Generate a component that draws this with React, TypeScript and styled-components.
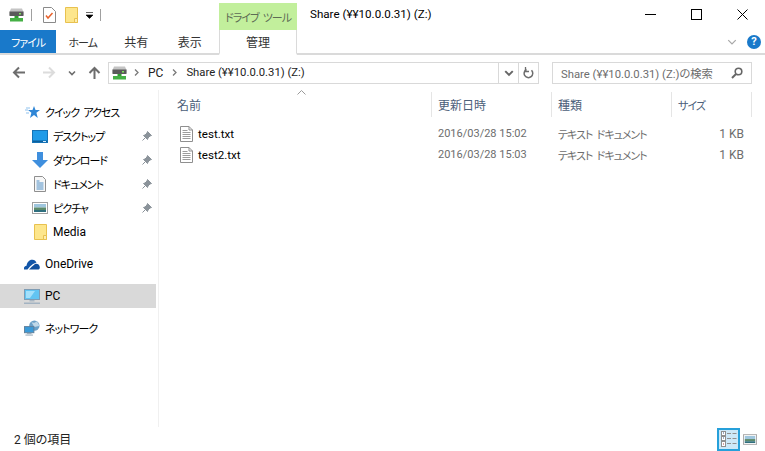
import React from "react";
import styled, { createGlobalStyle } from "styled-components";

const FONT = `Roboto, "Noto Sans CJK JP", sans-serif`;

const GlobalStyle = createGlobalStyle`
	html, body {
		margin: 0;
		padding: 0;
		background: #fff;
		overflow: hidden;
	}
	body {
		font-family: ${FONT};
		font-size: 12px;
		font-feature-settings: "palt";
		color: #000;
	}
`;

const DriveIcon = () => (
	<svg width="16" height="16" viewBox="0 0 16 16">
		<path d="M2 1.500h11l1.500 3.500v3H.5V5z" fill="#c4c4c4" />
		<rect x="0.500" y="4.500" width="14" height="4.500" fill="#5a5a5a" />
		<rect x="10" y="6" width="2" height="1.500" fill="#7fe05c" />
		<rect x="5.500" y="9" width="4" height="2" fill="#2f9e2f" />
		<rect x="1" y="11" width="13" height="3.500" fill="#45b045" />
	</svg>
);

const FolderIcon = () => (
	<svg width="13" height="16" viewBox="0 0 13 16">
		<path d="M.5.5h12v15H.5z" fill="#fde68c" stroke="#e8c14f" />
		<path d="M9.500 15.500v-4h3v4z" fill="#fdeeb0" stroke="#e8c14f" />
	</svg>
);

const PropsIcon = () => (
	<svg width="13" height="16" viewBox="0 0 13 16">
		<path d="M.5.5h8l4 4v11H.5z" fill="#fff" stroke="#8a8a8a" />
		<path d="M3 8.500l2 2.500 4.500-5" fill="none" stroke="#e8622c" strokeWidth="1.500" />
	</svg>
);

const TextFileIcon = () => (
	<svg width="13" height="16" viewBox="0 0 13 16">
		<path d="M.5.5h8.500l3.500 3.500v11.500H.5z" fill="#fff" stroke="#8f8f8f" />
		<path d="M9 .5V4h3.500" fill="none" stroke="#8f8f8f" />
		<path d="M2.500 4.500h5M2.500 6.500h8M2.500 8.500h8M2.500 10.500h8M2.500 12.500h8" stroke="#9c9c9c" />
	</svg>
);

const ArrowIcon = ({ dir, color }: { dir: "left" | "right" | "up"; color: string }) => {
	const d = {
		left: "M13 6.500H2M7 1.500l-5 5 5 5",
		right: "M1 6.500h11M7 1.500l5 5-5 5",
		up: "M6.500 13V2M1.500 7l5-5 5 5",
	}[dir];
	return (
		<svg width="14" height="14" viewBox="0 0 14 14">
			<path d={d} fill="none" stroke={color} strokeWidth="2" />
		</svg>
	);
};

const Chevron = ({ size = 8, color = "#6d6d6d", width = 1.6 }: { size?: number; color?: string; width?: number }) => (
	<svg width={size} height={size} viewBox="0 0 8 8">
		<path d="M1 2.500l3 3 3-3" fill="none" stroke={color} strokeWidth={width} />
	</svg>
);

const Breadcrumb = () => (
	<svg width="5" height="7" viewBox="0 0 5 7">
		<path d="M1 .5l3 3-3 3" fill="none" stroke="#7a7a7a" strokeWidth="1.300" />
	</svg>
);

const QuickAccessIcon = () => (
	<svg width="15" height="14" viewBox="0 0 15 14">
		<path d="M9 1l1.500 4H15l-3.600 2.800L12.800 13 9 10l-4 3 1.400-5.200L3 5h4.500z" fill="#2f86d6" />
		<path d="M0 5h3M1 3h4M1 8h3" stroke="#8fc2ee" />
	</svg>
);

const DesktopIcon = () => (
	<svg width="16" height="13" viewBox="0 0 16 13">
		<rect x="0.500" y="0.500" width="15" height="12" fill="#1f9be8" stroke="#1573b6" />
		<rect x="1" y="10.500" width="14" height="1.500" fill="#0d5f9c" />
		<rect x="11" y="11" width="3" height="1" fill="#cfeaff" />
	</svg>
);

const DownloadIcon = () => (
	<svg width="16" height="16" viewBox="0 0 16 16">
		<path d="M5 0h6v8h5l-8 8-8-8h5z" fill="#3f8fde" />
	</svg>
);

const DocumentIcon = () => (
	<svg width="12" height="16" viewBox="0 0 12 16">
		<path d="M.5.5h8l3 3v12H.5z" fill="#f7f7f7" stroke="#8f8f8f" />
		<path d="M2.500 5h3M2.500 7h7M2.500 9h7M2.500 11h7M2.500 13h7" stroke="#4f8fc6" />
	</svg>
);

const PictureIcon = ({ w = 16, h = 12 }: { w?: number; h?: number }) => (
	<svg width={w} height={h} viewBox="0 0 16 12">
		<rect x="0.500" y="0.500" width="15" height="11" fill="#fff" stroke="#a0a0a0" />
		<rect x="2" y="2" width="12" height="3.500" fill="#9fc6de" />
		<rect x="2" y="5.500" width="12" height="2.500" fill="#5c8a6a" />
		<rect x="2" y="8" width="12" height="2" fill="#2f6f7e" />
	</svg>
);

const OneDriveIcon = () => (
	<svg width="16" height="11" viewBox="0 0 16 11">
		<path d="M0 10.500c-.5-2 .5-3.500 2.500-3.800C3.200 3 5.500 .5 8.500 .8c2 .2 3.200 1.200 4 2.700L9 5 6 7.500 3.500 10.500z" fill="#1155a8" />
		<path d="M5 10.500l3-3 3-2.500c2-.8 4.500.5 4.800 3 .1 1.500-.5 2.500-1.300 2.500z" fill="#0f4f9e" />
	</svg>
);

const MonitorIcon = () => (
	<svg width="16" height="15" viewBox="0 0 16 15">
		<rect x="0.500" y="0.500" width="15" height="10" fill="#62c4f2" stroke="#7f9cb4" />
		<path d="M2 2h9l-5 7H2z" fill="#a4e0fa" />
		<rect x="5.500" y="11" width="5" height="1.500" fill="#a9b7c4" />
		<rect x="0" y="13.500" width="16" height="1.500" fill="#a3b3c2" />
	</svg>
);

const NetworkIcon = () => (
	<svg width="17" height="16" viewBox="0 0 17 16">
		<circle cx="11" cy="5.500" r="5.500" fill="#6aa0c8" />
		<path d="M8 2c2 1 4 .5 5-1 2 1 3 3 3 5l-5 1z" fill="#c0d8e8" />
		<rect x="0.500" y="6.500" width="10" height="6.500" fill="#3a9ad8" stroke="#5f7f9a" />
		<rect x="3" y="13.500" width="5" height="1" fill="#8ea2b2" />
		<rect x="1.500" y="15" width="8" height="1" fill="#8ea2b2" />
	</svg>
);

const PinIcon = () => (
	<svg width="10" height="10" viewBox="0 0 10 10">
		<path d="M5.500 .5l4 4-1.500.5-2 2-.5 1.500L1.500 4.500 3 4l2-2zM3.500 6.500L.5 9.500" fill="#8b939a" stroke="#8b939a" />
	</svg>
);

const SearchIcon = () => (
	<svg width="12" height="12" viewBox="0 0 12 12">
		<circle cx="7.500" cy="4.500" r="3.300" fill="none" stroke="#666" strokeWidth="1.600" />
		<path d="M5 7L1 11" stroke="#666" strokeWidth="2" />
	</svg>
);

const RefreshIcon = () => (
	<svg width="11" height="12" viewBox="0 0 11 12">
		<path d="M8.500 3.300A4.300 4.300 0 1 1 3.500 2.500" fill="none" stroke="#6d6d6d" strokeWidth="1.500" />
		<path d="M2.500 0v4.500h3.500" fill="none" stroke="#6d6d6d" strokeWidth="1.300" />
	</svg>
);

const DetailsIcon = () => (
	<svg width="16" height="16" viewBox="0 0 16 16">
		<rect x="0.500" y="0.500" width="4" height="4" fill="#fff" stroke="#8f8f8f" />
		<rect x="0.500" y="5.500" width="4" height="4" fill="#fff" stroke="#8f8f8f" />
		<rect x="0.500" y="10.500" width="4" height="5" fill="#fff" stroke="#8f8f8f" />
		<path d="M2 2h1M2 7h1" stroke="#3a5a8a" />
		<path d="M2 13h1" stroke="#b04040" />
		<path d="M6 2.500h4M11.500 2.500h4M6 7.500h4M11.500 7.500h4M6 12.500h4M11.500 12.500h4" stroke="#8f8f8f" />
	</svg>
);

type NavEntry = { label: string; kana?: boolean; icon: React.ReactNode; pinned?: boolean; sub?: boolean; selected?: boolean };

const NAV_GROUPS: NavEntry[][] = [
	[
		{ label: "クイック アクセス", kana: true, icon: <QuickAccessIcon /> },
		{ label: "デスクトップ", kana: true, icon: <DesktopIcon />, pinned: true, sub: true },
		{ label: "ダウンロード", kana: true, icon: <DownloadIcon />, pinned: true, sub: true },
		{ label: "ドキュメント", kana: true, icon: <DocumentIcon />, pinned: true, sub: true },
		{ label: "ピクチャ", kana: true, icon: <PictureIcon />, pinned: true, sub: true },
		{ label: "Media", icon: <FolderIcon />, sub: true },
	],
	[{ label: "OneDrive", icon: <OneDriveIcon /> }],
	[{ label: "PC", icon: <MonitorIcon />, selected: true }],
	[{ label: "ネットワーク", kana: true, icon: <NetworkIcon /> }],
];

const FILES = [
	{ name: "test.txt", date: "2016/03/28 15:02" },
	{ name: "test2.txt", date: "2016/03/28 15:03" },
];

const App = () => (
	<Window>
		<GlobalStyle />
		<TitleBar>
			<QuickAccess>
				<DriveIcon />
				<QatDivider />
				<PropsIcon />
				<FolderIcon />
				<QatDropdown>
					<svg width="7" height="7" viewBox="0 0 7 7">
						<path d="M0 .5h7M0 3h7L3.500 6.500z" fill="#000" stroke="#000" strokeWidth="0.600" />
					</svg>
				</QatDropdown>
				<QatDivider />
			</QuickAccess>
			<ContextTab>
				<Kana>ドライブ ツール</Kana>
			</ContextTab>
			<WindowTitle>Share (¥¥10.0.0.31) (Z:)</WindowTitle>
			<WindowControls>
				<WindowButton>
					<svg width="11" height="11" viewBox="0 0 11 11">
						<path d="M0 5.500h11" stroke="#000" />
					</svg>
				</WindowButton>
				<WindowButton>
					<svg width="11" height="11" viewBox="0 0 11 11">
						<rect x="0.500" y="0.500" width="10" height="10" fill="none" stroke="#000" />
					</svg>
				</WindowButton>
				<WindowButton>
					<svg width="11" height="11" viewBox="0 0 11 11">
						<path d="M.5.500l10 10M10.500.500l-10 10" stroke="#000" />
					</svg>
				</WindowButton>
			</WindowControls>
		</TitleBar>
		<TabBar>
			<FileTab>
				<Kana>ファイル</Kana>
			</FileTab>
			<Tab>
				<Kana>ホーム</Kana>
			</Tab>
			<Tab>共有</Tab>
			<Tab>表示</Tab>
			<ManageTab>管理</ManageTab>
			<TabBarEnd>
				<Chevron size={10} color="#a8a8a8" width={1} />
				<HelpBadge>?</HelpBadge>
			</TabBarEnd>
		</TabBar>
		<NavBar>
			<NavArrows>
				<ArrowIcon dir="left" color="#6d6d6d" />
				<ForwardSlot>
					<ArrowIcon dir="right" color="#dcdcdc" />
				</ForwardSlot>
				<RecentSlot>
					<Chevron />
				</RecentSlot>
				<ArrowIcon dir="up" color="#6d6d6d" />
			</NavArrows>
			<AddressBox>
				<AddressPath>
					<AddressIcon>
						<DriveIcon />
					</AddressIcon>
					<Breadcrumb />
					<span>PC</span>
					<Breadcrumb />
					<PathText>Share (¥¥10.0.0.31) (Z:)</PathText>
				</AddressPath>
				<AddressButton>
					<Chevron size={10} color="#666" />
				</AddressButton>
				<AddressButton>
					<RefreshIcon />
				</AddressButton>
			</AddressBox>
			<SearchBox>
				<PathText>Share (¥¥10.0.0.31) (Z:)の検索</PathText>
				<SearchIcon />
			</SearchBox>
		</NavBar>
		<Body>
			<Sidebar>
				{NAV_GROUPS.map((group, i) => (
					<NavGroup key={i}>
						{group.map((item) => (
							<NavItem key={item.label} $sub={item.sub} $selected={item.selected}>
								<NavIcon>{item.icon}</NavIcon>
								<NavLabel>{item.kana ? <Kana>{item.label}</Kana> : item.label}</NavLabel>
								{item.pinned && <PinIcon />}
							</NavItem>
						))}
					</NavGroup>
				))}
			</Sidebar>
			<Content>
				<SortCaret>
					<svg width="9" height="5" viewBox="0 0 9 5">
						<path d="M.5 4.500l4-4 4 4" fill="none" stroke="#9a9a9a" />
					</svg>
				</SortCaret>
				<HeaderRow>
					<HeaderCell>名前</HeaderCell>
					<HeaderCell>更新日時</HeaderCell>
					<HeaderCell>種類</HeaderCell>
					<HeaderCell>
						<Kana>サイズ</Kana>
					</HeaderCell>
				</HeaderRow>
				<FileList>
					{FILES.map((file) => (
						<FileRow key={file.name}>
							<NameCell>
								<TextFileIcon />
								<FileName>{file.name}</FileName>
							</NameCell>
							<DateCell>{file.date}</DateCell>
							<MetaCell>
								<Kana>テキスト ドキュメント</Kana>
							</MetaCell>
							<SizeCell>1 KB</SizeCell>
						</FileRow>
					))}
				</FileList>
			</Content>
		</Body>
		<StatusBar>
			<StatusText>2 個の項目</StatusText>
			<ViewButtons>
				<ViewButton $active>
					<DetailsIcon />
				</ViewButton>
				<ViewButton>
					<PictureIcon w={14} h={11} />
				</ViewButton>
			</ViewButtons>
		</StatusBar>
	</Window>
);

export default App;

const Kana = styled.span`
	font-size: 11px;
	letter-spacing: -1px;
	word-spacing: 2.5px;
`;

const PathText = styled.span`
	font-size: 11.3px;
`;

const Window = styled.div`
	width: 765px;
	height: 451px;
	display: flex;
	flex-direction: column;
	overflow: hidden;
	background: #fff;
`;

const TitleBar = styled.div`
	height: 30px;
	display: flex;
	align-items: flex-end;
	flex-shrink: 0;
`;

const QuickAccess = styled.div`
	width: 219px;
	height: 23px;
	padding: 0 0 7px 9px;
	box-sizing: border-box;
	display: flex;
	align-items: center;
	gap: 9px;
`;

const QatDivider = styled.div`
	width: 1px;
	height: 12px;
	margin: 0 2px 0 -3px;
	background: #a0a0a0;
`;

const QatDropdown = styled.div`
	display: flex;
	margin: 0 1px 0 -1px;
`;

const ContextTab = styled.div`
	width: 78px;
	height: 27px;
	background: #c2ef9c;
	color: #5d6b55;
	display: flex;
	align-items: center;
	justify-content: center;
	white-space: nowrap;
`;

const WindowTitle = styled.div`
	margin-left: 13px;
	height: 30px;
	line-height: 28px;
	font-size: 11.6px;
	white-space: nowrap;
	flex: 1;
`;

const WindowControls = styled.div`
	height: 30px;
	display: flex;
`;

const WindowButton = styled.div`
	width: 46px;
	height: 28px;
	display: flex;
	align-items: center;
	justify-content: center;
`;

const TabBar = styled.div`
	height: 25px;
	flex-shrink: 0;
	box-sizing: border-box;
	border-bottom: 2px solid #dadada;
	display: flex;
`;

const Tab = styled.div`
	width: 53.500px;
	height: 23px;
	display: flex;
	align-items: center;
	justify-content: center;
	color: #333;
`;

const FileTab = styled(Tab)`
	width: 56px;
	background: #1979ca;
	color: #fff;
`;

const ManageTab = styled(Tab)`
	width: 78px;
	height: 25px;
	margin-left: 2.500px;
	box-sizing: border-box;
	border: 1px solid #dadada;
	border-top: none;
	border-bottom: 2px solid #fff;
	background: #fff;
`;

const TabBarEnd = styled.div`
	margin-left: auto;
	padding-right: 4px;
	height: 23px;
	display: flex;
	align-items: center;
	gap: 10px;
`;

const HelpBadge = styled.div`
	width: 14px;
	height: 14px;
	border-radius: 50%;
	background: #1979ca;
	color: #fff;
	font-size: 11px;
	font-weight: 700;
	line-height: 14px;
	text-align: center;
`;

const NavBar = styled.div`
	height: 35px;
	flex-shrink: 0;
	display: flex;
	align-items: center;
	padding-left: 12px;
`;

const NavArrows = styled.div`
	width: 96px;
	display: flex;
	align-items: center;
`;

const ForwardSlot = styled.div`
	display: flex;
	margin-left: 16px;
`;

const RecentSlot = styled.div`
	display: flex;
	margin: 0 12px 0 12px;
`;

const AddressBox = styled.div`
	width: 431px;
	height: 22px;
	box-sizing: border-box;
	border: 1px solid #d9d9d9;
	display: flex;
	align-items: center;
`;

const AddressPath = styled.div`
	flex: 1;
	display: flex;
	align-items: center;
	padding-left: 3px;
	gap: 9px;
	color: #222;
	white-space: nowrap;
`;

const AddressIcon = styled.div`
	display: flex;
	margin-right: -3px;
`;

const AddressButton = styled.div`
	width: 19px;
	height: 20px;
	border-left: 1px solid #d9d9d9;
	display: flex;
	align-items: center;
	justify-content: center;
`;

const SearchBox = styled.div`
	width: 200px;
	height: 22px;
	margin-left: 13px;
	box-sizing: border-box;
	border: 1px solid #d9d9d9;
	padding: 0 8px;
	display: flex;
	align-items: center;
	justify-content: space-between;
	color: #6d6d6d;
	white-space: nowrap;
`;

const Body = styled.div`
	flex: 1;
	min-height: 0;
	display: flex;
`;

const Sidebar = styled.div`
	width: 159px;
	box-sizing: border-box;
	padding-top: 10px;
	padding-right: 2px;
	border-right: 1px solid #f0f0f0;
	display: flex;
	flex-direction: column;
	gap: 8px;
	flex-shrink: 0;
`;

const NavGroup = styled.div`
	display: flex;
	flex-direction: column;
`;

const NavItem = styled.div<{ $sub?: boolean; $selected?: boolean }>`
	height: 24px;
	display: flex;
	align-items: center;
	padding-left: ${(p) => (p.$sub ? 32 : 24)}px;
	padding-right: 4px;
	background: ${(p) => (p.$selected ? "#d9d9d9" : "transparent")};
`;

const NavIcon = styled.div`
	width: 16px;
	margin-right: 5px;
	display: flex;
	justify-content: center;
	align-items: center;
`;

const NavLabel = styled.div`
	flex: 1;
	white-space: nowrap;
`;

const Content = styled.div`
	flex: 1;
	position: relative;
	padding-top: 2px;
	min-width: 0;
`;

const SortCaret = styled.div`
	position: absolute;
	left: 138px;
	top: 0;
	display: flex;
`;

const HeaderRow = styled.div`
	display: grid;
	grid-template-columns: 273px 120px 120px 80px;
	height: 25px;
`;

const HeaderCell = styled.div`
	box-sizing: border-box;
	border-right: 1px solid #e5e5e5;
	padding-left: 6px;
	display: flex;
	align-items: center;
	color: #4c607a;

	&:first-child {
		padding-left: 18px;
	}
`;

const FileList = styled.div`
	margin-top: 6px;
	display: flex;
	flex-direction: column;
`;

const FileRow = styled.div`
	display: grid;
	grid-template-columns: 273px 120px 120px 80px;
	height: 21px;
	align-items: center;
`;

const NameCell = styled.div`
	display: flex;
	align-items: center;
	gap: 5px;
	padding-left: 21px;
`;

const FileName = styled.span`
	font-size: 11.6px;
`;

const MetaCell = styled.div`
	padding-left: 6px;
	color: #6d6d6d;
	white-space: nowrap;
`;

const DateCell = styled(MetaCell)`
	font-size: 11px;
`;

const SizeCell = styled(MetaCell)`
	padding-left: 0;
	padding-right: 8px;
	text-align: right;
`;

const StatusBar = styled.div`
	height: 24px;
	flex-shrink: 0;
	display: flex;
	align-items: center;
	justify-content: space-between;
	padding-left: 14px;
	color: #222;
`;

const StatusText = styled.span`
	padding-bottom: 2px;
`;

const ViewButtons = styled.div`
	display: flex;
	align-items: center;
	margin-right: 8px;
	gap: 3px;
`;

const ViewButton = styled.div<{ $active?: boolean }>`
	width: ${(p) => (p.$active ? 23 : 14)}px;
	height: 23px;
	box-sizing: border-box;
	display: flex;
	align-items: center;
	justify-content: center;
	background: ${(p) => (p.$active ? "#cce8f8" : "transparent")};
	border: ${(p) => (p.$active ? "2px solid #26a0da" : "none")};
`;
